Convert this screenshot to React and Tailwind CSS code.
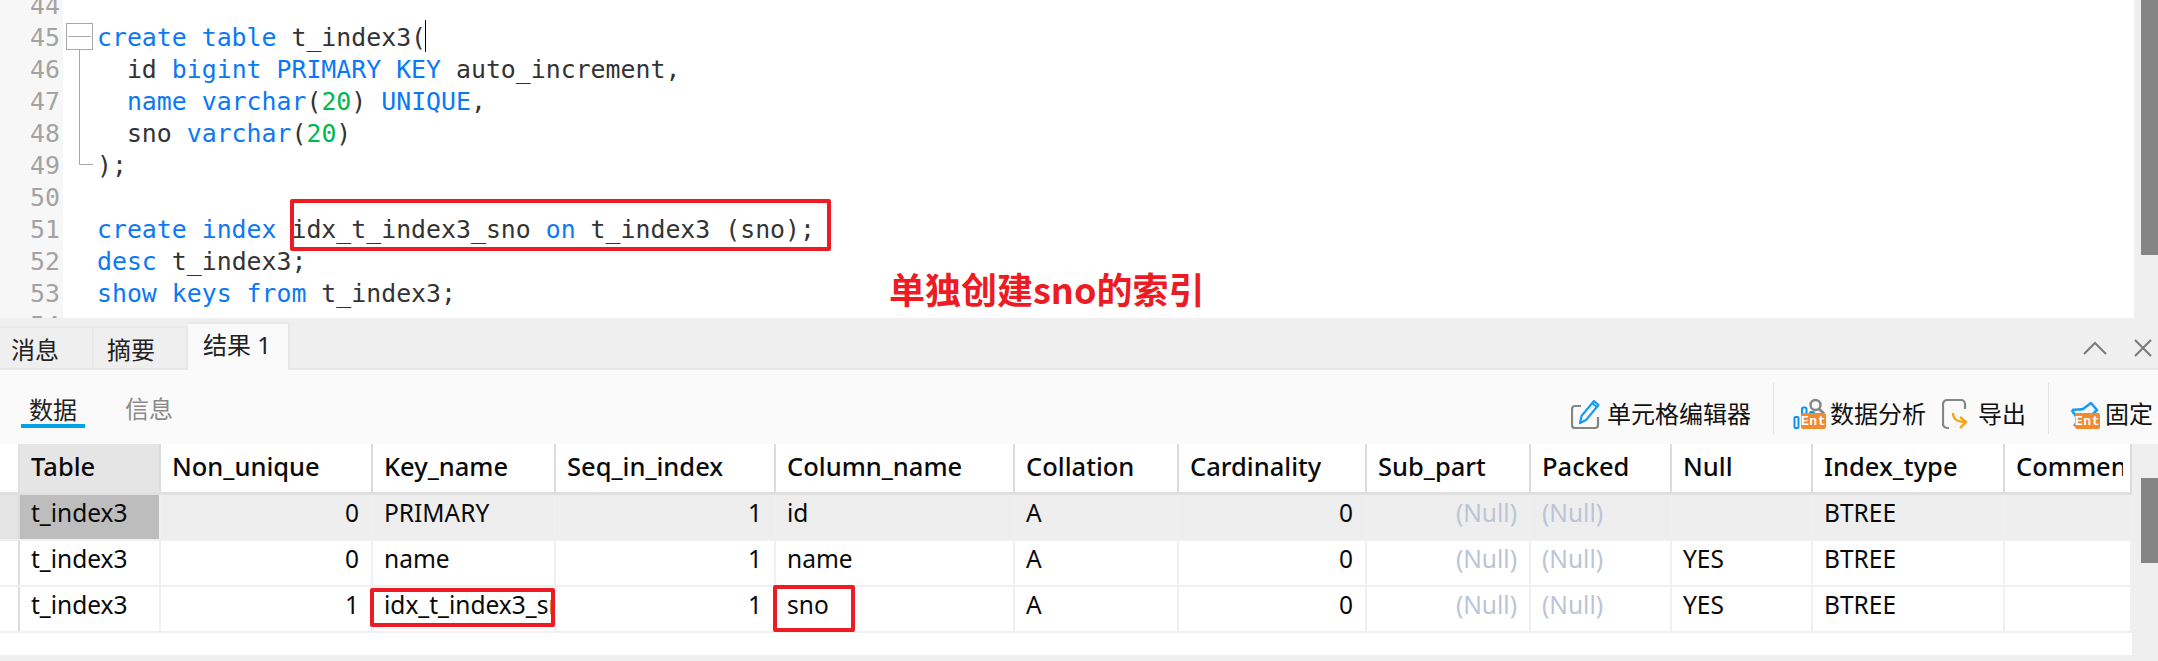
import React from "react";

const lines = [
  [44, []],
  [45, [["k", "create table"], ["p", " t_index3("]]],
  [46, [["p", "  id "], ["k", "bigint PRIMARY KEY"], ["p", " auto_increment,"]]],
  [47, [["k", "  name varchar"], ["p", "("], ["n", "20"], ["p", ") "], ["k", "UNIQUE"], ["p", ","]]],
  [48, [["p", "  sno "], ["k", "varchar"], ["p", "("], ["n", "20"], ["p", ")"]]],
  [49, [["p", ");"]]],
  [50, []],
  [51, [["k", "create index"], ["p", " idx_t_index3_sno "], ["k", "on"], ["p", " t_index3 (sno);"]]],
  [52, [["k", "desc"], ["p", " t_index3;"]]],
  [53, [["k", "show keys from"], ["p", " t_index3;"]]],
  [54, []],
];

const tokenClass = { k: "text-[#0b78f5]", p: "text-[#333333]", n: "text-[#00b84f]" };

const cols = [
  { name: "Table", w: "w-[141px]" },
  { name: "Non_unique", w: "w-[212px]", right: true },
  { name: "Key_name", w: "w-[183px]" },
  { name: "Seq_in_index", w: "w-[220px]", right: true },
  { name: "Column_name", w: "w-[239px]" },
  { name: "Collation", w: "w-[164px]" },
  { name: "Cardinality", w: "w-[188px]", right: true },
  { name: "Sub_part", w: "w-[164px]", right: true },
  { name: "Packed", w: "w-[141px]" },
  { name: "Null", w: "w-[141px]" },
  { name: "Index_type", w: "w-[192px]" },
  { name: "Comment", w: "w-[127px]" },
];

const rows = [
  ["t_index3", "0", "PRIMARY", "1", "id", "A", "0", null, null, "", "BTREE", ""],
  ["t_index3", "0", "name", "1", "name", "A", "0", null, null, "YES", "BTREE", ""],
  ["t_index3", "1", "idx_t_index3_sno", "1", "sno", "A", "0", null, null, "YES", "BTREE", ""],
];

function EntBadge({ className }) {
  return (
    <span className={"absolute flex h-[16px] w-[25px] items-center justify-center rounded-[2px] bg-[#f28a2e] font-['Liberation_Mono',monospace] text-[13px] font-bold leading-none tracking-[0.5px] text-white " + className}>
      Ent
    </span>
  );
}

function EditIcon() {
  return (
    <svg width="30" height="32" viewBox="0 0 30 32" fill="none" className="mr-[6px]">
      <path d="M10 8H4a3 3 0 0 0-3 3v16a3 3 0 0 0 3 3h20a3 3 0 0 0 3-3v-8" stroke="#858585" strokeWidth="2.2" />
      <path d="M9 25l1.5-7L23 3l4.5 4L15 22z" stroke="#1a9bf5" strokeWidth="2.2" strokeLinejoin="round" />
      <path d="M21 5l5 4" stroke="#1a9bf5" strokeWidth="2.2" />
    </svg>
  );
}

function AnalysisIcon() {
  return (
    <span className="relative mr-[4px] block h-[32px] w-[33px]">
      <svg width="33" height="32" viewBox="0 0 33 32" fill="none" className="absolute left-0 top-0">
        <circle cx="22.5" cy="7" r="5" stroke="#858585" strokeWidth="2.4" />
        <path d="M26 11l5 4.5" stroke="#858585" strokeWidth="2.6" />
        <rect x="1.5" y="19" width="4" height="11" rx="1" stroke="#0d94f0" strokeWidth="2" />
        <rect x="9" y="9.5" width="4.5" height="14" rx="1.5" stroke="#0d94f0" strokeWidth="2" />
        <rect x="17" y="14" width="4" height="8" rx="1" stroke="#0d94f0" strokeWidth="2" />
      </svg>
      <EntBadge className="left-[8px] top-[15px]" />
    </span>
  );
}

function ExportIcon() {
  return (
    <svg width="26" height="32" viewBox="0 0 26 32" fill="none" className="mr-[10px]">
      <path d="M7 30H5a4 4 0 0 1-4-4V6a4 4 0 0 1 4-4h14a4 4 0 0 1 4 4v5" stroke="#858585" strokeWidth="2.2" />
      <path d="M11 15c0 6 3 9 13 9" stroke="#f5a31a" strokeWidth="2.4" />
      <path d="M18 30l6-6-6-5" stroke="#f5a31a" strokeWidth="2.4" />
    </svg>
  );
}

function PinIcon() {
  return (
    <span className="relative mr-[3px] block h-[32px] w-[32px]">
      <svg width="32" height="32" viewBox="0 0 32 32" fill="none" className="absolute left-0 top-0">
        <path d="M2 12c4-1 8 0 11-1l8-6 6 7-7 7-8 3" stroke="#1a9bf5" strokeWidth="2.6" strokeLinejoin="round" />
        <path d="M2 12c1 3 3 5 6 8" stroke="#1a9bf5" strokeWidth="2.6" />
        <path d="M7 24l-3 4" stroke="#858585" strokeWidth="2.2" />
      </svg>
      <EntBadge className="left-[5px] top-[15px]" />
    </span>
  );
}

function ToolButton({ icon, label }) {
  return (
    <div className="mt-[12px] flex items-center">
      {icon}
      <span className="text-[24px] leading-[32px] text-[#111111]">{label}</span>
    </div>
  );
}

function Cell({ col, value, selected, first }) {
  const isNull = value === null;
  return (
    <div
      className={
        col.w +
        " flex h-full shrink-0 items-start overflow-hidden whitespace-nowrap border-r-2 border-[#f0f0f0] pl-[11px] pr-[12px] text-[24.5px] leading-[36px] " +
        (col.right ? "justify-end " : "") +
        (isNull ? "text-[#bcc4d6] " : "text-[#0a0a0a] ") +
        (selected && first ? "bg-[#bdbdbd]" : "")
      }
    >
      {isNull ? "(Null)" : value}
    </div>
  );
}

export default function App() {
  return (
    <div className="relative h-[661px] w-[2158px] overflow-hidden bg-[#efefef] font-['Noto_Sans','Noto_Sans_CJK_SC',sans-serif]">
      {/* SQL editor */}
      <div className="flex h-[318px] overflow-hidden">
        <div className="h-full w-[63px] shrink-0 overflow-hidden bg-[#f7f7f7] font-['DejaVu_Sans_Mono',monospace] text-[24.85px] leading-[32px] text-[#a3a3a3]">
          <div className="-mt-[10px] pl-[30px]">
            {lines.map(([n]) => (
              <div key={n} className="h-[32px]">{n}</div>
            ))}
          </div>
        </div>
        <div className="h-full w-[2071px] shrink-0 overflow-hidden bg-white pl-[34px] font-['DejaVu_Sans_Mono',monospace] text-[24.85px] leading-[32px]">
          <div className="-mt-[10px]">
            {lines.map(([n, toks]) => (
              <div key={n} className="h-[32px] whitespace-pre">
                {toks.map(([t, s], i) => (
                  <span key={i} className={tokenClass[t]}>{s}</span>
                ))}
              </div>
            ))}
          </div>
        </div>
        <div className="h-full w-[24px] shrink-0 bg-[#efefef] pl-[7px]">
          <div className="h-[255px] w-[17px] bg-[#858585]" />
        </div>
      </div>

      {/* fold markers and caret */}
      <svg width="40" height="150" viewBox="0 0 40 150" fill="none" className="absolute left-[60px] top-[20px]">
        <rect x="6.5" y="3.5" width="26" height="26" stroke="#a8a8a8" />
        <path d="M8 16.5H31M19.5 30V144.5H33" stroke="#a8a8a8" />
      </svg>
      <div className="absolute left-[425px] top-[20px] h-[32px] w-px bg-black" />

      {/* annotation */}
      <div className="absolute left-[889px] top-[264px] whitespace-nowrap font-['Noto_Sans_CJK_SC',sans-serif] text-[36px] font-bold leading-[48px] text-[#ed1c24]">
        单独创建sno的索引
      </div>
      <div className="absolute left-[290px] top-[199px] h-[52px] w-[541px] rounded-[2px] border-4 border-[#ed1c24]" />

      {/* result tabs */}
      <div className="relative flex h-[52px] items-end border-b-2 border-[#e8e8e8]">
        <div className="flex h-[42px] w-[94px] items-center justify-start border-r-2 border-t-2 border-[#e8e8e8] pl-[11px] pt-[4px] text-[24px] leading-none text-[#222222]">消息</div>
        <div className="flex h-[42px] w-[94px] items-center justify-start border-r-2 border-t-2 border-[#e8e8e8] pl-[13px] pt-[4px] text-[24px] leading-none text-[#222222]">摘要</div>
        <div className="-mb-[2px] flex h-[48px] w-[102px] items-start justify-start border-r-2 border-t-2 border-[#e8e8e8] bg-[#fafafa] pl-[15px] pt-[5px] text-[24px] leading-[32px] text-[#222222]">结果 1</div>
        <div className="ml-auto flex items-center gap-[27px] pb-[11px] pr-[6px]">
          <svg width="24" height="14" viewBox="0 0 24 14" fill="none">
            <path d="M1 13L12 2l11 11" stroke="#7a7a7a" strokeWidth="2" />
          </svg>
          <svg width="18" height="18" viewBox="0 0 18 18" fill="none">
            <path d="M1 1l16 16M17 1L1 17" stroke="#7a7a7a" strokeWidth="2" />
          </svg>
        </div>
      </div>

      {/* sub tabs and toolbar */}
      <div className="flex h-[74px] w-[2158px] bg-[#fafafa] pr-[5px]">
        <div className="ml-[21px] mt-[18px] h-[40px] w-[64px] border-b-4 border-[#00a2e8] pt-[6px] text-center text-[24px] leading-[32px] text-[#222222]">数据</div>
        <div className="ml-[40px] mt-[23px] text-[24px] leading-[32px] text-[#8a8a8a]">信息</div>
        <div className="ml-auto mt-[12px] flex h-[52px] items-center">
          <ToolButton icon={<EditIcon />} label="单元格编辑器" />
          <div className="ml-[22px] mr-[19px] h-[51px] w-[1px] bg-[#e2e2e2]" />
          <ToolButton icon={<AnalysisIcon />} label="数据分析" />
          <div className="ml-[16px]" />
          <ToolButton icon={<ExportIcon />} label="导出" />
          <div className="ml-[22px] mr-[21px] h-[51px] w-[1px] bg-[#e2e2e2]" />
          <ToolButton icon={<PinIcon />} label="固定" />
        </div>
      </div>

      {/* result grid */}
      <div className="flex h-[211px] w-[2158px]">
        <div className="h-[211px] w-[2132px] shrink-0 bg-white">
          <div className="flex h-[51px] border-b-[3px] border-[#e0e0e0]">
            <div className="w-[20px] shrink-0 border-r-2 border-[#e0e0e0]" />
            {cols.map((c, i) => (
              <div
                key={c.name}
                className={
                  c.w +
                  " flex h-full shrink-0 overflow-hidden whitespace-nowrap border-r-2 border-[#dcdcdc] pl-[11px] pr-[7px] text-[25.5px] font-medium leading-[44px] text-[#0a0a0a] " +
                  (i === 0 ? "bg-[#e5e5e5]" : "")
                }
              >
                <span className="block overflow-hidden">{c.name}</span>
              </div>
            ))}
          </div>
          {rows.map((r, ri) => (
            <div
              key={ri}
              className={"flex h-[46px] border-b-2 border-[#f0f0f0] " + (ri === 0 ? "bg-[#eeeeee]" : "bg-white")}
            >
              <div className={"w-[20px] shrink-0 border-r-2 border-[#dcdcdc] " + (ri === 0 ? "bg-[#e4e4e4]" : "")} />
              {cols.map((c, ci) => (
                <Cell key={c.name} col={c} value={r[ci]} selected={ri === 0} first={ci === 0} />
              ))}
            </div>
          ))}
        </div>
        <div className="h-full flex-1 pl-[9px]">
          <div className="mt-[34px] h-[85px] w-[17px] bg-[#858585]" />
        </div>
      </div>

      {/* annotation boxes over the grid */}
      <div className="absolute left-[370px] top-[588px] h-[39px] w-[185px] rounded-[2px] border-4 border-[#ed1c24]" />
      <div className="absolute left-[773px] top-[585px] h-[47px] w-[82px] rounded-[2px] border-4 border-[#ed1c24]" />
    </div>
  );
}
